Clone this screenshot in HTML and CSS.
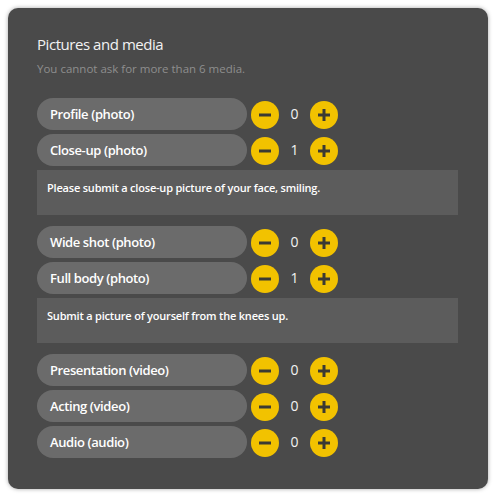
FILE: index.html
```html
<!DOCTYPE html>
<html lang="en">
<head>
<meta charset="utf-8">
<title>Pictures and media</title>
<link rel="stylesheet" href="styles.css">
</head>
<body>
<section class="card">
  <h1 class="title">Pictures and media</h1>
  <p class="subtitle">You cannot ask for more than 6 media.</p>

  <div class="group">
    <div class="row">
      <div class="pill">Profile (photo)</div>
      <button class="btn minus" aria-label="decrease"><svg viewBox="0 0 28 28"><path d="M8 14h12"/></svg></button>
      <span class="count">0</span>
      <button class="btn plus" aria-label="increase"><svg viewBox="0 0 28 28"><path d="M8 14h12M14 8v12"/></svg></button>
    </div>
    <div class="row">
      <div class="pill">Close-up (photo)</div>
      <button class="btn minus" aria-label="decrease"><svg viewBox="0 0 28 28"><path d="M8 14h12"/></svg></button>
      <span class="count">1</span>
      <button class="btn plus" aria-label="increase"><svg viewBox="0 0 28 28"><path d="M8 14h12M14 8v12"/></svg></button>
    </div>
    <div class="desc">Please submit a close-up picture of your face, smiling.</div>
  </div>

  <div class="group">
    <div class="row">
      <div class="pill">Wide shot (photo)</div>
      <button class="btn minus" aria-label="decrease"><svg viewBox="0 0 28 28"><path d="M8 14h12"/></svg></button>
      <span class="count">0</span>
      <button class="btn plus" aria-label="increase"><svg viewBox="0 0 28 28"><path d="M8 14h12M14 8v12"/></svg></button>
    </div>
    <div class="row">
      <div class="pill">Full body (photo)</div>
      <button class="btn minus" aria-label="decrease"><svg viewBox="0 0 28 28"><path d="M8 14h12"/></svg></button>
      <span class="count">1</span>
      <button class="btn plus" aria-label="increase"><svg viewBox="0 0 28 28"><path d="M8 14h12M14 8v12"/></svg></button>
    </div>
    <div class="desc">Submit a picture of yourself from the knees up.</div>
  </div>

  <div class="group">
    <div class="row">
      <div class="pill">Presentation (video)</div>
      <button class="btn minus" aria-label="decrease"><svg viewBox="0 0 28 28"><path d="M8 14h12"/></svg></button>
      <span class="count">0</span>
      <button class="btn plus" aria-label="increase"><svg viewBox="0 0 28 28"><path d="M8 14h12M14 8v12"/></svg></button>
    </div>
    <div class="row">
      <div class="pill">Acting (video)</div>
      <button class="btn minus" aria-label="decrease"><svg viewBox="0 0 28 28"><path d="M8 14h12"/></svg></button>
      <span class="count">0</span>
      <button class="btn plus" aria-label="increase"><svg viewBox="0 0 28 28"><path d="M8 14h12M14 8v12"/></svg></button>
    </div>
    <div class="row">
      <div class="pill">Audio (audio)</div>
      <button class="btn minus" aria-label="decrease"><svg viewBox="0 0 28 28"><path d="M8 14h12"/></svg></button>
      <span class="count">0</span>
      <button class="btn plus" aria-label="increase"><svg viewBox="0 0 28 28"><path d="M8 14h12M14 8v12"/></svg></button>
    </div>
  </div>
</section>
</body>
</html>
```
FILE: styles.css
```css
html, body {
  margin: 0;
  padding: 0;
  background: #ffffff;
}
body {
  padding: 8px;
  font-family: "Open Sans", "Noto Sans", sans-serif;
}
.card {
  box-sizing: border-box;
  width: 480px;
  height: 481px;
  background: #4a4a4a;
  border-radius: 10px;
  box-shadow: 0 0 4px rgba(0, 0, 0, 0.35);
  padding: 26px 29px 0 29px;
}
.title {
  margin: 0;
  font-size: 15px;
  letter-spacing: -0.45px;
  line-height: 20px;
  font-weight: 400;
  color: #f2f2f2;
}
.subtitle {
  margin: 7px 0 21px 0;
  font-size: 11.5px;
  letter-spacing: 0px;
  line-height: 16px;
  color: #8e8e8e;
}
.group {
  margin-bottom: 11px;
}
.row {
  display: flex;
  align-items: center;
  height: 32px;
  margin-bottom: 4px;
}
.pill {
  box-sizing: border-box;
  width: 210px;
  height: 32px;
  border-radius: 16px;
  background: #6b6b6b;
  color: #ffffff;
  font-size: 13px;
  letter-spacing: -0.4px;
  font-weight: 600;
  line-height: 32px;
  padding-left: 13px;
}
.btn {
  width: 28px;
  height: 28px;
  border: 0;
  padding: 0;
  border-radius: 50%;
  background: #f2c200;
  display: flex;
  align-items: center;
  justify-content: center;
  margin-top: 1px;
}
.minus {
  margin-left: 4px;
}
.btn svg {
  width: 28px;
  height: 28px;
  fill: none;
  stroke: #3b3a33;
  stroke-width: 3;
}
.count {
  width: 31px;
  text-align: center;
  color: #f2f2f2;
  font-size: 14px;
  line-height: 20px;
}
.desc {
  box-sizing: border-box;
  width: 421px;
  height: 45px;
  background: #5c5c5c;
  color: #ffffff;
  font-size: 11px;
  letter-spacing: -0.2px;
  font-weight: 600;
  line-height: 16px;
  padding: 10px 10px;
}
```
